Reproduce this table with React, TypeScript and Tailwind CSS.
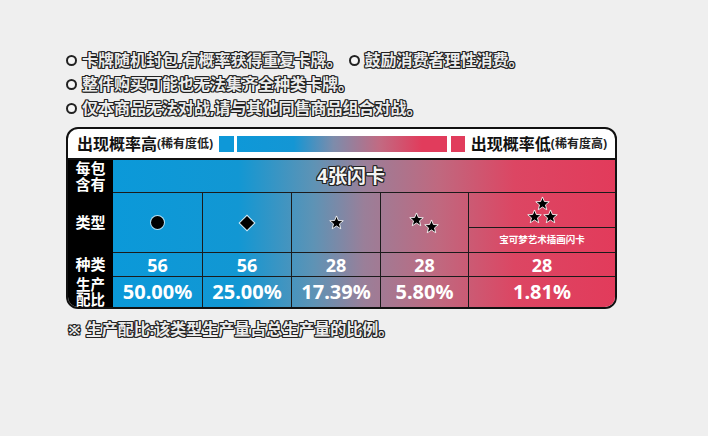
import React from 'react';

const outline =
  '[text-shadow:1px_0_#222,-1px_0_#222,0_1px_#222,0_-1px_#222,1px_1px_#222,-1px_-1px_#222,1px_-1px_#222,-1px_1px_#222]';

const Bullet = () => (
  <span className="inline-block w-[11px] h-[11px] rounded-full border-2 border-[#222] bg-[#f6f6f6] mr-[5px] shrink-0" />
);

const Star = ({ size = 15 }: { size?: number }) => (
  <svg width={size} height={size} viewBox="0 0 24 24">
    <polygon
      points="12,1.5 15,8.8 22.8,9.2 16.8,14.2 18.8,22 12,17.6 5.2,22 7.2,14.2 1.2,9.2 9,8.8"
      fill="#000"
      stroke="#fff"
      strokeWidth="1.4"
      strokeLinejoin="round"
    />
  </svg>
);

const Line = ({ children }: { children: React.ReactNode }) => (
  <div className={`flex items-center h-[24px] text-[16px] font-bold text-[#ececec] ${outline}`}>
    {children}
  </div>
);

const App: React.FC = () => {
  return (
    <div className="w-[708px] h-[436px] bg-[#efefef] pt-[48px] pl-[66px] font-['Noto_Sans','Noto_Sans_CJK_SC',sans-serif]">
      {/* notes */}
      <Line>
        <Bullet />
        <span>卡牌随机封包,有概率获得重复卡牌。</span>
        <span className="ml-[6px] flex items-center">
          <Bullet />
          鼓励消费者理性消费。
        </span>
      </Line>
      <Line>
        <Bullet />
        整件购买可能也无法集齐全种类卡牌。
      </Line>
      <Line>
        <Bullet />
        仅本商品无法对战,请与其他同售商品组合对战。
      </Line>

      {/* table */}
      <div className="mt-[7px] w-[551px] border-2 border-[#111] rounded-[12px] overflow-hidden bg-white">
        <div className="h-[31px] flex items-center pl-[9px] pr-[8px] border-b-2 border-[#111]">
          <span className="text-[16px] font-bold text-[#111] leading-none">出现概率高</span>
          <span className="text-[12px] font-bold text-[#222] leading-none">(稀有度低)</span>
          <span className="ml-[6px] w-[15px] h-[16px] bg-[#0e98d8]" />
          <span className="ml-[3px] flex-1 h-[16px] bg-[linear-gradient(90deg,#0e98d8_0%,#1496d4_27%,#7d8cab_46%,#c26a82_68%,#e13c5c_88%,#e13c5c_100%)]" />
          <span className="ml-[4px] w-[14px] h-[16px] bg-[#e13c5c]" />
          <span className="ml-[6px] text-[16px] font-bold text-[#111] leading-none">出现概率低</span>
          <span className="text-[12px] font-bold text-[#222] leading-none">(稀有度高)</span>
        </div>

        <div className="flex">
          {/* row labels */}
          <div className="w-[45px] bg-black text-white font-bold flex flex-col">
            <div className="h-[32px] flex items-center justify-center text-[15px] leading-[16px] text-center">
              每包<br />含有
            </div>
            <div className="h-[60px] flex items-center justify-center text-[15px]">类型</div>
            <div className="h-[24px] flex items-center justify-center text-[15px] leading-none">种类</div>
            <div className="h-[31px] flex items-center justify-center text-[14.5px] leading-[15px] text-center">
              生产<br />配比
            </div>
          </div>

          {/* gradient area */}
          <div className="flex-1 text-white font-bold bg-[linear-gradient(90deg,#0b99d9_0%,#1297d3_25%,#5e93b5_40%,#9a7f99_50%,#c0687f_65%,#dc4663_80%,#e23b5b_100%)]">
            <div className="h-[32px] flex items-center justify-center pr-[26px]">
              <span className={`text-[19px] text-[#f4f4f4] ${outline}`}>4张闪卡</span>
            </div>

            <div className="h-[60px] grid grid-cols-[89px_89px_89px_88px_1fr] border-t border-[#1b1b1b]">
              <div className="flex items-center justify-center">
                <span className="w-[13px] h-[13px] rounded-full bg-black ring-1 ring-white/70" />
              </div>
              <div className="flex items-center justify-center border-l border-[#1b1b1b]">
                <span className="w-[10px] h-[10px] rotate-45 bg-black ring-1 ring-white/80" />
              </div>
              <div className="flex items-center justify-center border-l border-[#1b1b1b]">
                <Star />
              </div>
              <div className="flex items-center justify-center border-l border-[#1b1b1b]">
                <div className="flex items-start pr-[2px]">
                  <Star />
                  <div className="mt-[7px]">
                    <Star />
                  </div>
                </div>
              </div>
              <div className="flex flex-col border-l border-[#1b1b1b]">
                <div className="h-[34px] flex flex-col items-center justify-center">
                  <Star />
                  <div className="flex gap-[1px] -mt-[2px]">
                    <Star />
                    <Star />
                  </div>
                </div>
                <div className="flex-1 flex items-center justify-center border-t border-[#1b1b1b] text-[9.5px] font-bold">
                  宝可梦艺术插画闪卡
                </div>
              </div>
            </div>

            <div className="h-[24px] grid grid-cols-[89px_89px_89px_88px_1fr] border-t border-[#1b1b1b] text-[18px] leading-none">
              <div className="flex items-center justify-center">56</div>
              <div className="flex items-center justify-center border-l border-[#1b1b1b]">56</div>
              <div className="flex items-center justify-center border-l border-[#1b1b1b]">28</div>
              <div className="flex items-center justify-center border-l border-[#1b1b1b]">28</div>
              <div className="flex items-center justify-center border-l border-[#1b1b1b]">28</div>
            </div>

            <div className="h-[31px] grid grid-cols-[89px_89px_89px_88px_1fr] border-t border-[#1b1b1b] text-[20px] leading-none">
              <div className="flex items-center justify-center">50.00%</div>
              <div className="flex items-center justify-center border-l border-[#1b1b1b]">25.00%</div>
              <div className="flex items-center justify-center border-l border-[#1b1b1b]">17.39%</div>
              <div className="flex items-center justify-center border-l border-[#1b1b1b]">5.80%</div>
              <div className="flex items-center justify-center border-l border-[#1b1b1b]">1.81%</div>
            </div>
          </div>
        </div>
      </div>

      {/* footnote */}
      <div className={`mt-[8px] flex items-center h-[24px] text-[16px] font-bold text-[#ececec] ${outline}`}>
        <span className="ml-[2px] mr-[5px] text-[15px]">※</span>
        生产配比:该类型生产量占总生产量的比例。
      </div>
    </div>
  );
};

export default App;
